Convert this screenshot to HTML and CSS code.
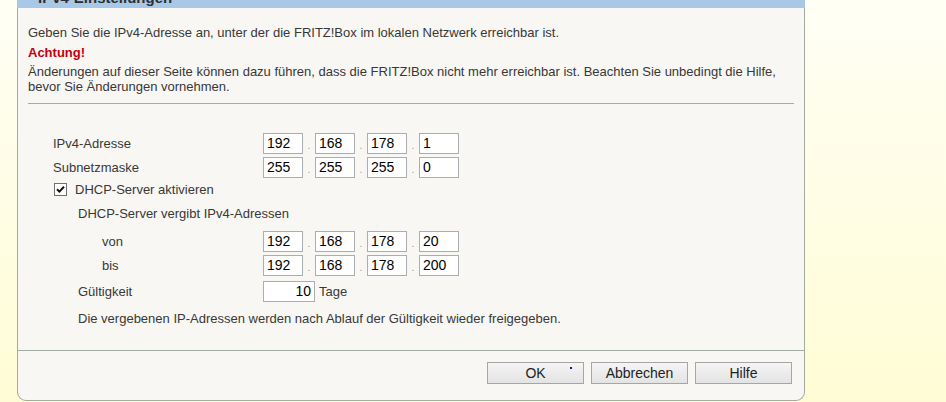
FILE: index.html
```html
<!DOCTYPE html>
<html lang="de">
<head>
<meta charset="utf-8">
<title>IPv4-Einstellungen</title>
<link rel="stylesheet" href="styles.css">
</head>
<body>
<div class="panel">
  <div class="panel-head">IPv4-Einstellungen</div>
  <div class="panel-body">
    <p class="intro">Geben Sie die IPv4-Adresse an, unter der die FRITZ!Box im lokalen Netzwerk erreichbar ist.</p>
    <div class="warn-title">Achtung!</div>
    <p class="warn-text">Änderungen auf dieser Seite können dazu führen, dass die FRITZ!Box nicht mehr erreichbar ist. Beachten Sie unbedingt die Hilfe, bevor Sie Änderungen vornehmen.</p>
    <div class="rule"></div>

    <div class="form">
      <div class="row row-first">
        <span class="label">IPv4-Adresse</span>
        <span class="ip"><span class="field">192</span><span class="dot">.</span><span class="field">168</span><span class="dot">.</span><span class="field">178</span><span class="dot">.</span><span class="field">1</span></span>
      </div>
      <div class="row">
        <span class="label">Subnetzmaske</span>
        <span class="ip"><span class="field">255</span><span class="dot">.</span><span class="field">255</span><span class="dot">.</span><span class="field">255</span><span class="dot">.</span><span class="field">0</span></span>
      </div>
      <div class="check-row">
        <span class="checkbox"><svg width="9" height="9" viewBox="0 0 9 9"><path d="M1 4.2 L3.4 6.6 L8 1.8" fill="none" stroke="#111" stroke-width="2"/></svg></span>
        <span class="check-label">DHCP-Server aktivieren</span>
      </div>
      <div class="sub">
        <div class="sub-title">DHCP-Server vergibt IPv4-Adressen</div>
        <div class="row row-von">
          <span class="label label-deep">von</span>
          <span class="ip"><span class="field">192</span><span class="dot">.</span><span class="field">168</span><span class="dot">.</span><span class="field">178</span><span class="dot">.</span><span class="field">20</span></span>
        </div>
        <div class="row">
          <span class="label label-deep">bis</span>
          <span class="ip"><span class="field">192</span><span class="dot">.</span><span class="field">168</span><span class="dot">.</span><span class="field">178</span><span class="dot">.</span><span class="field">200</span></span>
        </div>
        <div class="row row-lease">
          <span class="label">Gültigkeit</span>
          <span class="field field-wide">10</span><span class="unit">Tage</span>
        </div>
        <p class="note">Die vergebenen IP-Adressen werden nach Ablauf der Gültigkeit wieder freigegeben.</p>
      </div>
    </div>
  </div>
  <div class="panel-foot">
    <button class="btn btn-ok">OK</button>
    <button class="btn">Abbrechen</button>
    <button class="btn">Hilfe</button>
  </div>
</div>
</body>
</html>
```

FILE: styles.css
```css
html, body {
  margin: 0;
  padding: 0;
}
body {
  width: 946px;
  height: 402px;
  overflow: hidden;
  background: linear-gradient(#fffff5, #fffcd5);
  font-family: "Liberation Sans", Arial, sans-serif;
  font-size: 13px;
  color: #383838;
}
.panel {
  margin: -20px 0 0 17px;
  width: 786px;
  border: 1px solid #a2ab9f;
  border-top: none;
  border-radius: 0 0 9px 9px;
  background: #f8f7f3;
}
.panel-head {
  height: 19px;
  padding: 9px 0 0 21px;
  line-height: 17px;
  background: #a7c9e7;
  font-size: 15px;
  font-weight: bold;
  color: #2e2e2e;
  margin: 0 -1px 0 -1px;
}
.panel-body {
  padding: 0 10px 23px 10px;
}
.intro {
  margin: 17px 0 0 0;
  line-height: 16px;
}
.warn-title {
  margin-top: 4px;
  line-height: 16px;
  font-weight: bold;
  color: #c00010;
  font-size: 13px;
}
.warn-text {
  margin: 3px 0 0 0;
  line-height: 15px;
}
.rule {
  margin-top: 9px;
  height: 1px;
  background: #a5ada3;
}
.form {
  padding-left: 25px;
}
.row {
  display: flex;
  align-items: center;
  height: 21px;
  margin-top: 3px;
}
.row-first {
  margin-top: 29px;
}
.label {
  width: 210px;
  flex: none;
}
.sub .label {
  width: 185px;
}
.sub .label-deep {
  width: 161px;
  padding-left: 24px;
}
.ip {
  display: flex;
  align-items: stretch;
}
.field {
  box-sizing: border-box;
  width: 40px;
  height: 21px;
  padding: 0 3px;
  border: 1px solid #a9aeb4;
  background: #fff;
  color: #000;
  font-size: 14px;
  line-height: 19px;
}
.field-wide {
  width: 52px;
  text-align: right;
}
.dot {
  width: 12px;
  text-align: center;
  font-size: 10px;
  line-height: 16px;
  align-self: flex-end;
  color: #9a9a9a;
}
.unit {
  margin-left: 4px;
}
.check-row {
  display: flex;
  align-items: center;
  height: 20px;
  margin-top: 1px;
  padding-left: 1px;
}
.checkbox {
  box-sizing: border-box;
  width: 13px;
  height: 13px;
  border: 1px solid #707070;
  background: #fff;
  display: flex;
  align-items: center;
  justify-content: center;
}
.check-label {
  margin-left: 8px;
}
.sub {
  padding-left: 25px;
}
.sub-title {
  margin-top: 5px;
  line-height: 20px;
}
.row-von {
  margin-top: 7px;
}
.row-lease {
  margin-top: 5px;
}
.note {
  margin: 9px 0 0 0;
  line-height: 16px;
}
.panel-foot {
  border-top: 1px solid #a2ab9f;
  padding: 11px 12px 16px 0;
  display: flex;
  justify-content: flex-end;
  gap: 7px;
}
.btn {
  position: relative;
  width: 97px;
  height: 22px;
  margin: 0;
  padding: 0;
  border: 1px solid #a6a6a6;
  background: linear-gradient(#f5f5f5, #e3e3e3);
  font-family: "Liberation Sans", Arial, sans-serif;
  font-size: 14px;
  color: #222;
}
.btn-ok::after {
  content: "";
  position: absolute;
  top: 4px;
  right: 11px;
  width: 2px;
  height: 2px;
  background: #1a1a80;
}
```
